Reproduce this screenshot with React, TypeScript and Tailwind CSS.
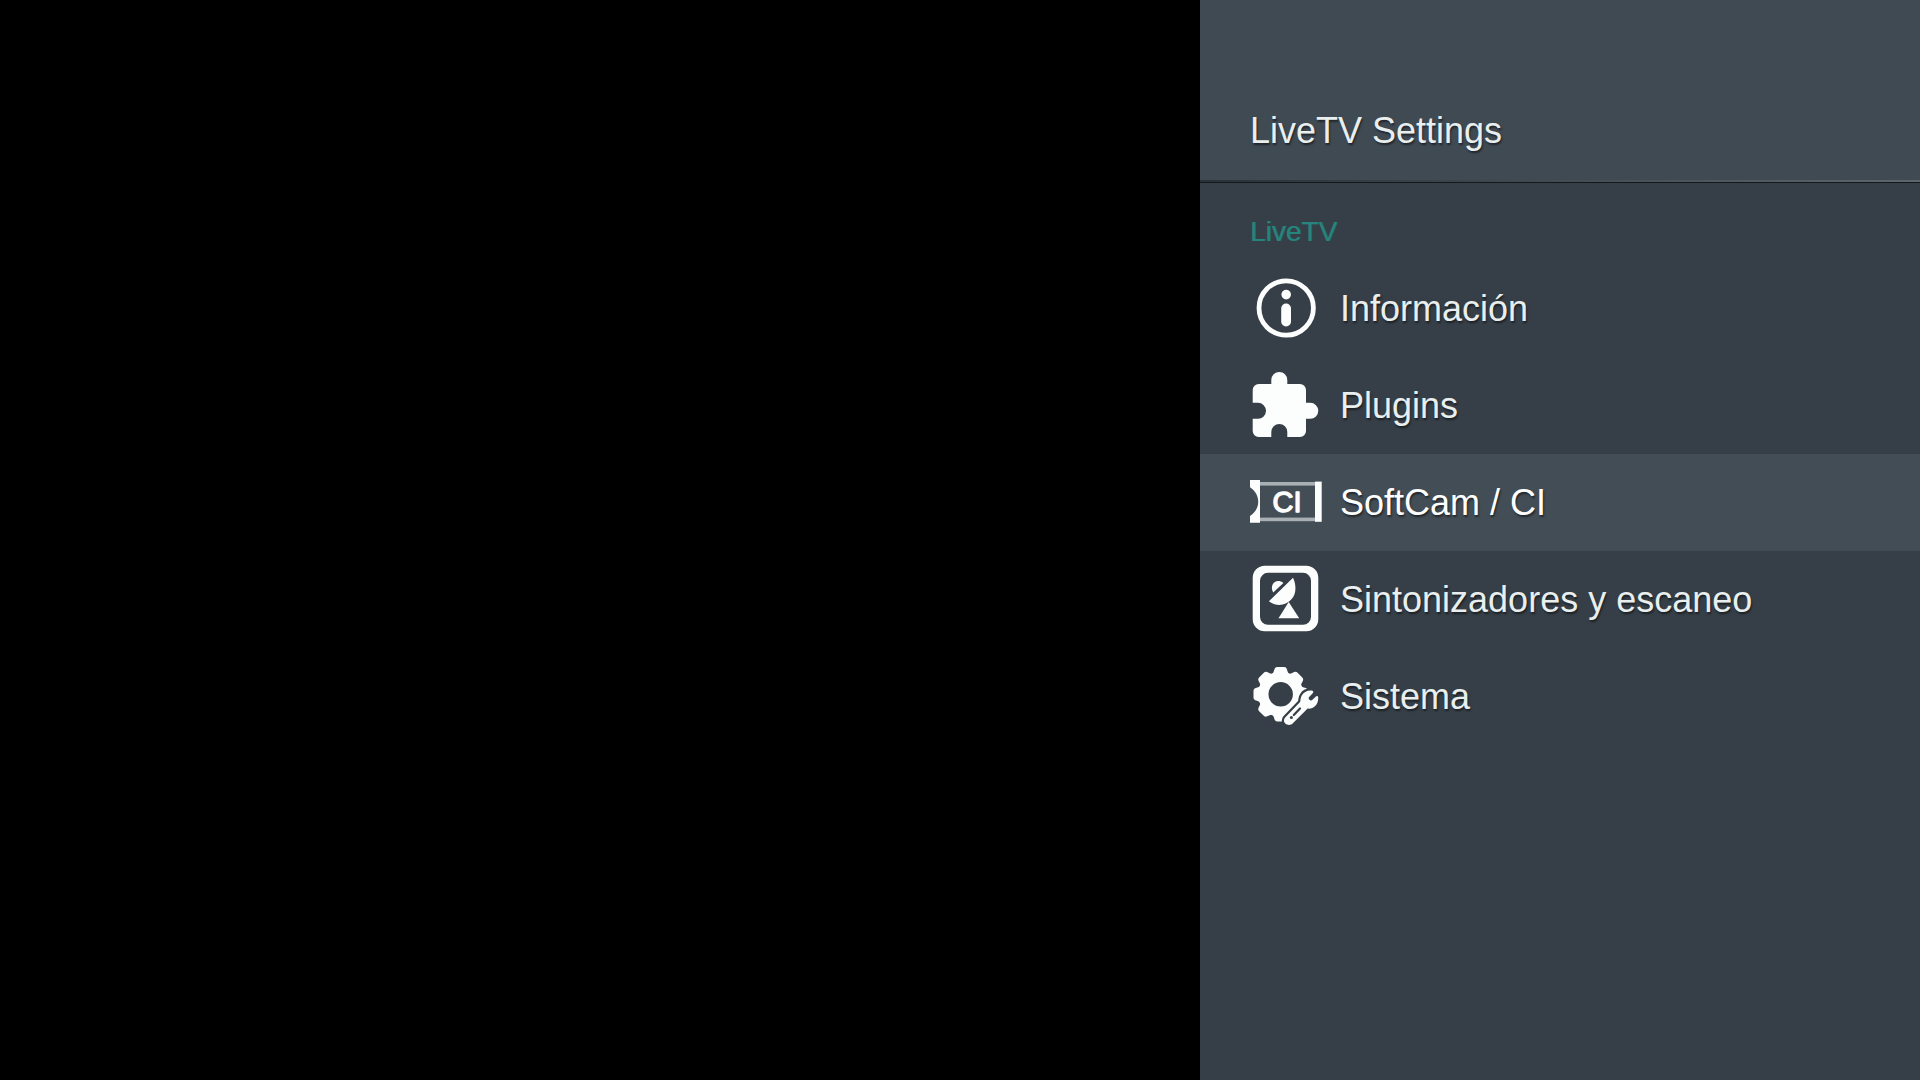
import type { ReactNode } from "react";
import { clsx } from "clsx";

type MenuItem = {
  id: string;
  label: string;
  icon: ReactNode;
};

const iconClass = "h-18 w-18 shrink-0 text-[#fcfefd]";

function InfoIcon() {
  return (
    <svg viewBox="0 0 72 72" className={iconClass} fill="currentColor" aria-hidden="true">
      <circle cx="36.2" cy="36" r="27.2" fill="none" stroke="currentColor" strokeWidth="4.8" />
      <circle cx="36.2" cy="22.6" r="4.8" />
      <rect x="31.2" y="31.6" width="9.8" height="22.8" rx="4.9" />
    </svg>
  );
}

function PuzzleIcon() {
  return (
    <svg viewBox="0 0 72 72" className={iconClass} fill="currentColor" aria-hidden="true">
      <path d="M8.7 15H21.3V11a8 8 0 0 1 16 0v4H50a6 6 0 0 1 6 6v12.8h4.3a8 8 0 0 1 0 16H56V62a6 6 0 0 1-6 6H37.3v-5a8 8 0 0 0-16 0v5H8.7a6 6 0 0 1-6-6V49.8H8a8 8 0 0 0 0-16H2.7V21a6 6 0 0 1 6-6Z" />
    </svg>
  );
}

function CardIcon() {
  return (
    <svg viewBox="0 0 72 72" className={iconClass} fill="currentColor" aria-hidden="true">
      <rect x="9" y="16" width="57" height="3.6" fill="#a9b0b3" />
      <rect x="9" y="51.6" width="57" height="3.6" fill="#a9b0b3" />
      <path d="M0 14H10V56.7H0V50C11 43 11 28.5 0 21.3Z" />
      <rect x="65" y="15.6" width="6.7" height="40.2" />
      <text
        x="37"
        y="46.2"
        textAnchor="middle"
        fontSize="29"
        className="font-['Liberation_Sans',Arial,sans-serif] text-shadow-none"
        stroke="currentColor"
        strokeWidth="1.4"
        strokeLinejoin="round"
      >
        CI
      </text>
    </svg>
  );
}

function DishIcon() {
  return (
    <svg viewBox="0 0 72 72" className={iconClass} fill="currentColor" aria-hidden="true">
      <path
        fillRule="evenodd"
        d="M14.7 2.7H56.3a12 12 0 0 1 12 12V56.3a12 12 0 0 1-12 12H14.7a12 12 0 0 1-12-12V14.7a12 12 0 0 1 12-12ZM18 9.8a8 8 0 0 0-8 8V53.8a8 8 0 0 0 8 8H53a8 8 0 0 0 8-8V17.8a8 8 0 0 0-8-8Z"
      />
      <path d="M43 14.8C46.6 22 46.4 31.5 41.2 36.6C35.5 43.2 25.5 43.6 18.9 38.2Z" />
      <path d="M33.4 20C29.6 17 25 17.6 22.9 21C21.4 23.6 21.5 26.8 23.2 29.4Z" />
      <path d="M38.7 39 49.2 55.2H28.5Z" />
    </svg>
  );
}

const WRENCH =
  "M62.4 30.7C57.5 30.1 53.6 32.2 51.6 35.8C50.4 38 50.6 40.3 50.1 42.1L35.2 57.4C33.4 59.4 33.6 62 35.3 63.6C37.4 65.5 40.6 65.6 42.6 63.6L57.6 48.6C62.6 49.4 68.6 45.4 68.2 37.2C67.8 35.6 66.6 35.7 65.9 36.6L61.9 40.3C60.3 40.9 58.4 39.5 58.7 37.4L62.7 33.2C63.6 32.2 63.4 31 62.4 30.7Z";

function GearIcon() {
  return (
    <svg viewBox="0 0 72 72" className={iconClass} fill="currentColor" aria-hidden="true">
      <mask id="gear-cut" maskUnits="userSpaceOnUse" x="0" y="0" width="72" height="72">
        <rect width="72" height="72" fill="white" />
        <circle cx="30.7" cy="34.3" r="12.2" fill="black" />
        <path d={WRENCH} fill="black" stroke="black" strokeWidth="4.4" />
      </mask>
      <mask id="wrench-cut" maskUnits="userSpaceOnUse" x="0" y="0" width="72" height="72">
        <rect width="72" height="72" fill="white" />
        <path d="M50 48.5 43.8 55" stroke="black" strokeWidth="2.2" strokeLinecap="round" />
        <circle cx="41.4" cy="57.5" r="1.5" fill="black" />
      </mask>
      <g mask="url(#gear-cut)">
        <circle cx="30.7" cy="34.3" r="22.6" />
        {[0, 45, 90, 135, 180, 225, 270, 315].map((angle) => (
          <path
            key={angle}
            d="M21.7 14.5C25 12.2 23.4 7.1 27.4 7.1H34C38 7.1 36.4 12.2 39.7 14.5Z"
            transform={`rotate(${angle} 30.7 34.3)`}
          />
        ))}
      </g>
      <path d={WRENCH} mask="url(#wrench-cut)" />
    </svg>
  );
}

const menuItems: MenuItem[] = [
  { id: "info", label: "Información", icon: <InfoIcon /> },
  { id: "plugins", label: "Plugins", icon: <PuzzleIcon /> },
  { id: "softcam", label: "SoftCam / CI", icon: <CardIcon /> },
  { id: "tuners", label: "Sintonizadores y escaneo", icon: <DishIcon /> },
  { id: "system", label: "Sistema", icon: <GearIcon /> },
];

export default function App() {
  const selectedId = "softcam";

  return (
    <div className="flex min-h-screen justify-end bg-black font-['Liberation_Sans',Arial,sans-serif]">
      <aside className="flex w-3/8 flex-col bg-[#363f47] text-[#e9eeee]">
        <header className="bg-[#404a53] px-[50px] pt-[111px] pb-[29px]">
          <h1 className="text-4xl text-shadow-[1px_2px_2px_rgb(0_0_0/0.5)]">LiveTV Settings</h1>
        </header>

        {/* Divider: highlight fading in towards the right, dark edge below */}
        <div className="h-[3px] border-b border-[#14191d] bg-linear-to-r from-[#2a3238] to-[#5d676b]" />

        <h2 className="px-[50px] pt-[33px] pb-3 text-[28px] leading-8 text-[#25857c] text-shadow-[1px_0_0_rgb(37_133_124/0.6)]">
          LiveTV
        </h2>

        <nav className="flex flex-col">
          {menuItems.map((item) => (
            <button
              key={item.id}
              type="button"
              aria-current={item.id === selectedId ? "true" : undefined}
              className={clsx(
                "flex items-center gap-[18px] px-[50px] pt-3 pb-[13px] text-left text-4xl",
                "text-shadow-[1px_2px_2px_rgb(0_0_0/0.5)]",
                item.id === selectedId && "bg-[#434d55] text-white",
              )}
            >
              {item.icon}
              <span className="pt-0.5">{item.label}</span>
            </button>
          ))}
        </nav>
      </aside>
    </div>
  );
}
